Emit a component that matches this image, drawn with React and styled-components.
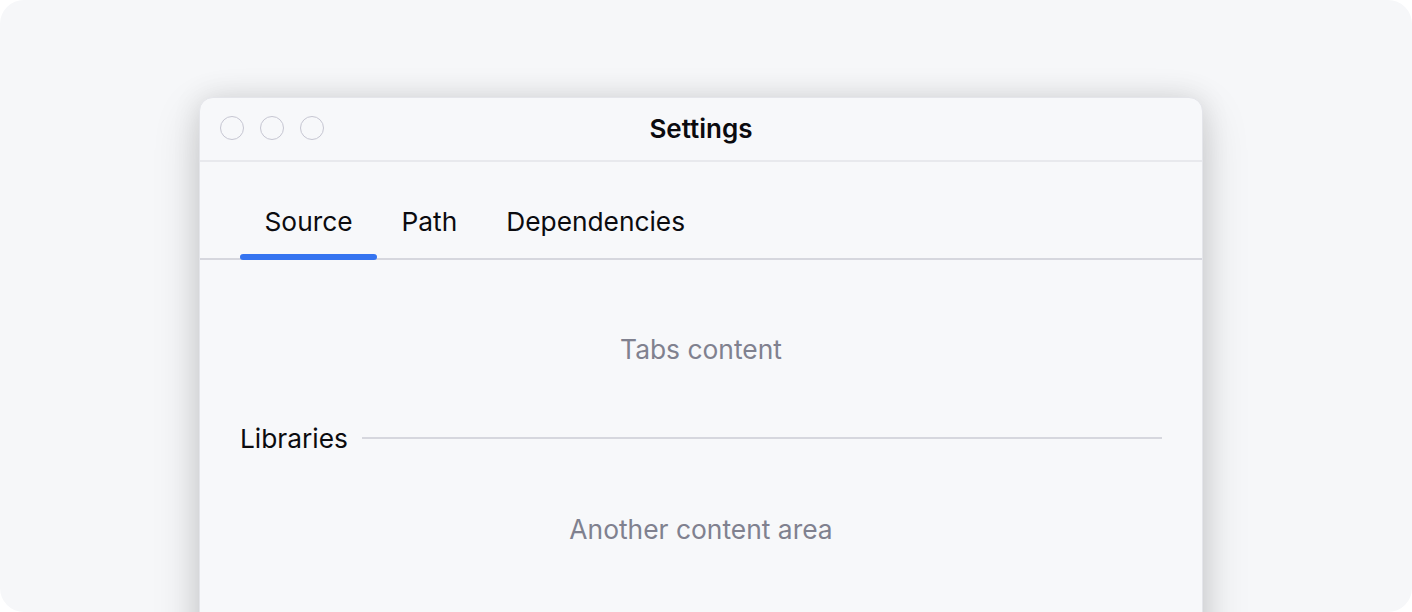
import React, { useState } from 'react';
import styled, { createGlobalStyle } from 'styled-components';

const GlobalStyle = createGlobalStyle`
  html, body {
    margin: 0;
    padding: 0;
    background: #ffffff;
  }
  body {
    font-family: Inter, "Noto Sans", sans-serif;
    -webkit-font-smoothing: antialiased;
  }
`;

const Page = styled.div`
  width: 1412px;
  height: 612px;
  box-sizing: border-box;
  border-radius: 24px;
  background: #f6f7f9;
  overflow: hidden;
  padding: 97px 0 0 199px;
`;

const Window = styled.div`
  width: 1004px;
  height: 560px;
  border-radius: 14px;
  background: #f7f8fa;
  border: 1px solid #e4e5ea;
  box-sizing: border-box;
  box-shadow: 0 16px 48px rgba(0, 0, 0, 0.16), 0 0 28px rgba(0, 0, 0, 0.1);
  display: flex;
  flex-direction: column;
`;

const TitleBar = styled.div`
  position: relative;
  height: 62px;
  display: flex;
  align-items: center;
  justify-content: center;
  border-bottom: 2px solid #e8e9ed;
`;

const Lights = styled.div`
  position: absolute;
  left: 20px;
  top: 18px;
  display: flex;
  gap: 16px;
`;

const Light = styled.span`
  width: 24px;
  height: 24px;
  box-sizing: border-box;
  border-radius: 50%;
  border: 1.5px solid #c6c6d2;
`;

const Title = styled.div`
  font-size: 26px;
  line-height: 32px;
  font-weight: 600;
  color: #0b0b0f;
`;

const Body = styled.div`
  padding: 0 40px;
  display: flex;
  flex-direction: column;
`;

const TabList = styled.div`
  display: flex;
  margin: 0 -40px;
  padding: 24px 40px 0;
  border-bottom: 2px solid #d6d7de;
`;

const Tab = styled.button`
  position: relative;
  border: none;
  background: none;
  font-family: inherit;
  font-size: 26.3px;
  line-height: 32px;
  color: #0b0b0f;
  padding: 20px 24.5px 20px;
  cursor: pointer;

  &::after {
    content: '';
    position: absolute;
    left: 0;
    right: 0;
    bottom: -2px;
    height: 6px;
    border-radius: 3px;
    background: ${({ $active }) => ($active ? '#3574f0' : 'transparent')};
  }
`;

const Placeholder = styled.div`
  text-align: center;
  font-size: 26.4px;
  line-height: 32px;
  color: #80818f;
  padding: ${({ $pad }) => $pad};
`;

const Section = styled.div`
  display: flex;
  align-items: center;
  gap: 14px;
`;

const SectionLabel = styled.span`
  font-size: 26.3px;
  line-height: 32px;
  color: #0b0b0f;
`;

const Rule = styled.div`
  flex: 1;
  height: 2px;
  margin-top: -2px;
  background: #d6d7de;
`;

const tabs = ['Source', 'Path', 'Dependencies'];

export default function App() {
  const [active, setActive] = useState(0);
  return (
    <>
      <GlobalStyle />
      <Page>
        <Window>
          <TitleBar>
            <Lights>
              <Light />
              <Light />
              <Light />
            </Lights>
            <Title>Settings</Title>
          </TitleBar>
          <Body>
            <TabList>
              {tabs.map((t, i) => (
                <Tab key={t} $active={i === active} onClick={() => setActive(i)}>
                  {t}
                </Tab>
              ))}
            </TabList>
            <Placeholder $pad="73px 0 58px">Tabs content</Placeholder>
            <Section>
              <SectionLabel>Libraries</SectionLabel>
              <Rule />
            </Section>
            <Placeholder $pad="58px 0 0">Another content area</Placeholder>
          </Body>
        </Window>
      </Page>
    </>
  );
}
